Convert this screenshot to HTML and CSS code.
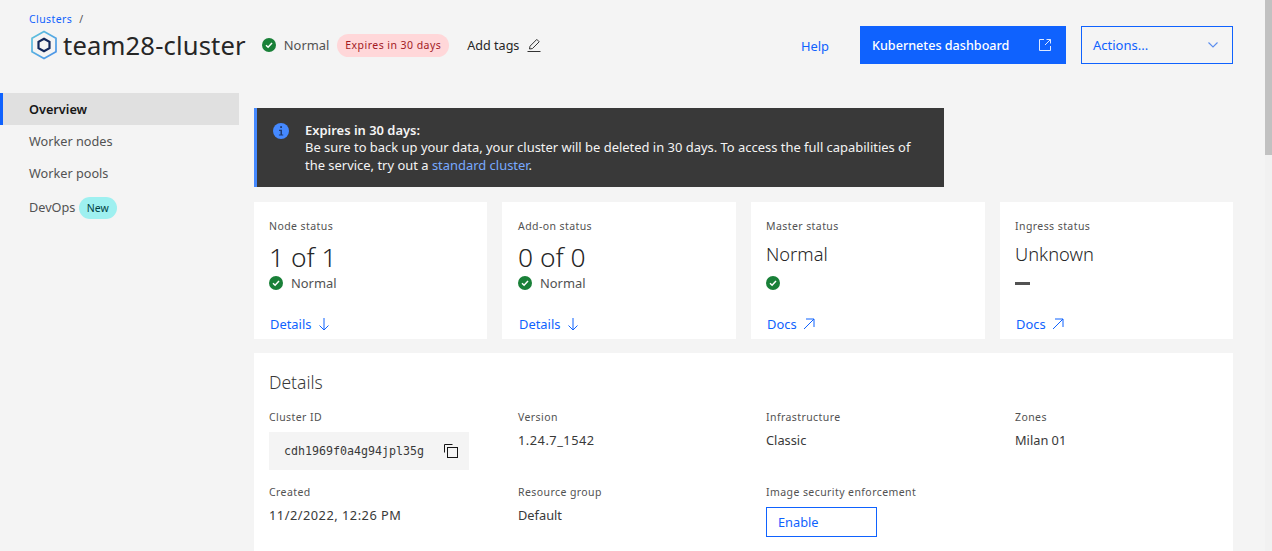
FILE: index.html
```html
<!DOCTYPE html>
<html lang="en">
<head>
    <meta charset="UTF-8">
    <meta name="viewport" content="width=device-width, initial-scale=1.0">
    <title>team28-cluster</title>
    <link rel="stylesheet" href="styles.css">
</head>
<body>
    <header class="page-header">
        <div class="title-block">
            <div class="breadcrumb"><a href="#">Clusters</a><span class="slash">/</span></div>
            <div class="title-row">
                <svg class="cluster-logo" width="30" height="30" viewBox="0 0 30 30" fill="none">
                    <defs>
                        <linearGradient id="hexEdge" x1="0" y1="0" x2="1" y2="1">
                            <stop offset="0" stop-color="#5fc4dc"/>
                            <stop offset="1" stop-color="#4a90e8"/>
                        </linearGradient>
                    </defs>
                    <path d="M15 1.5 L27 8.2 V21.8 L15 28.5 L3 21.8 V8.2 Z" stroke="url(#hexEdge)" stroke-width="1.7"/>
                    <path d="M15 8.7 L20.5 11.8 V18.2 L15 21.3 L9.5 18.2 V11.8 Z" stroke="#12275a" stroke-width="2.2"/>
                </svg>
                <h1>team28-cluster</h1>
                <svg class="check" width="14" height="14" viewBox="0 0 14 14">
                    <circle cx="7" cy="7" r="7" fill="#198038"/>
                    <path d="M4 7.2 L6.1 9.2 L10 5.1" fill="none" stroke="#fff" stroke-width="1.5"/>
                </svg>
                <span class="status-text">Normal</span>
                <span class="tag-red">Expires in 30 days</span>
                <span class="add-tags">Add tags</span>
                <svg width="16" height="16" viewBox="0 0 16 16" fill="none" stroke="#333" stroke-width="1">
                    <path d="M1.5 14.5 H14.5"/>
                    <path d="M3.5 12 L4 9.2 L10.8 2.4 L13.2 4.8 L6.4 11.6 Z"/>
                </svg>
            </div>
        </div>
        <div class="header-actions">
            <a class="help" href="#">Help</a>
            <button class="btn-primary">
                <span>Kubernetes dashboard</span>
                <svg width="16" height="16" viewBox="0 0 16 16" fill="none" stroke="#dfe9ff" stroke-width="1">
                    <path d="M7 2.5 H2.5 V13.5 H13.5 V9"/>
                    <path d="M9.5 2.5 H13.5 V6.5"/>
                    <path d="M13.5 2.5 L8 8"/>
                </svg>
            </button>
            <button class="btn-actions">
                <span>Actions...</span>
                <svg width="12" height="8" viewBox="0 0 12 8" fill="none" stroke="#5a8dee" stroke-width="1.1">
                    <path d="M1.5 1.5 L6 6 L10.5 1.5"/>
                </svg>
            </button>
        </div>
    </header>

    <div class="layout">
        <nav class="sidebar">
            <a class="nav-item active" href="#">Overview</a>
            <a class="nav-item" href="#">Worker nodes</a>
            <a class="nav-item" href="#">Worker pools</a>
            <a class="nav-item nav-devops" href="#">DevOps <span class="tag-new">New</span></a>
        </nav>

        <main class="content">
            <div class="notice">
                <svg class="notice-icon" width="16" height="16" viewBox="0 0 16 16">
                    <circle cx="8" cy="8" r="8" fill="#4589ff"/>
                    <rect x="7.2" y="3.2" width="1.8" height="1.8" fill="#1f3a6e"/>
                    <path d="M6 6.7 H9 V11.4 H10.2 V12.6 H5.9 V11.4 H7.5 V7.9 H6 Z" fill="#1f3a6e"/>
                </svg>
                <div class="notice-text">
                    <strong>Expires in 30 days:</strong><br>
                    Be sure to back up your data, your cluster will be deleted in 30 days. To access the full capabilities of the service, try out a <a href="#">standard cluster</a>.
                </div>
            </div>

            <section class="cards">
                <div class="card">
                    <div class="label">Node status</div>
                    <div class="big-value">1 of 1</div>
                    <div class="card-status">
                        <svg width="14" height="14" viewBox="0 0 14 14"><circle cx="7" cy="7" r="7" fill="#198038"/><path d="M4 7.2 L6.1 9.2 L10 5.1" fill="none" stroke="#fff" stroke-width="1.5"/></svg>
                        <span>Normal</span>
                    </div>
                    <a class="card-link" href="#">Details
                        <svg width="14" height="14" viewBox="0 0 14 14" fill="none" stroke="#0f62fe" stroke-width="1"><path d="M7 1 V13 M2.5 8.5 L7 13 L11.5 8.5"/></svg>
                    </a>
                </div>
                <div class="card">
                    <div class="label">Add-on status</div>
                    <div class="big-value">0 of 0</div>
                    <div class="card-status">
                        <svg width="14" height="14" viewBox="0 0 14 14"><circle cx="7" cy="7" r="7" fill="#198038"/><path d="M4 7.2 L6.1 9.2 L10 5.1" fill="none" stroke="#fff" stroke-width="1.5"/></svg>
                        <span>Normal</span>
                    </div>
                    <a class="card-link" href="#">Details
                        <svg width="14" height="14" viewBox="0 0 14 14" fill="none" stroke="#0f62fe" stroke-width="1"><path d="M7 1 V13 M2.5 8.5 L7 13 L11.5 8.5"/></svg>
                    </a>
                </div>
                <div class="card">
                    <div class="label">Master status</div>
                    <div class="mid-value">Normal</div>
                    <div class="card-status">
                        <svg width="14" height="14" viewBox="0 0 14 14"><circle cx="7" cy="7" r="7" fill="#198038"/><path d="M4 7.2 L6.1 9.2 L10 5.1" fill="none" stroke="#fff" stroke-width="1.5"/></svg>
                    </div>
                    <a class="card-link" href="#">Docs
                        <svg width="12" height="12" viewBox="0 0 12 12" fill="none" stroke="#0f62fe" stroke-width="1"><path d="M1 11 L11 1 M3 1 H11 V9"/></svg>
                    </a>
                </div>
                <div class="card">
                    <div class="label">Ingress status</div>
                    <div class="mid-value">Unknown</div>
                    <div class="card-status"><span class="dash"></span></div>
                    <a class="card-link" href="#">Docs
                        <svg width="12" height="12" viewBox="0 0 12 12" fill="none" stroke="#0f62fe" stroke-width="1"><path d="M1 11 L11 1 M3 1 H11 V9"/></svg>
                    </a>
                </div>
            </section>

            <section class="details">
                <h2>Details</h2>
                <div class="details-grid">
                    <div class="field">
                        <div class="label">Cluster ID</div>
                        <div class="code-box">
                            <code>cdh1969f0a4g94jpl35g</code>
                            <svg width="16" height="16" viewBox="0 0 16 16" fill="none" stroke="#161616" stroke-width="1">
                                <rect x="4.5" y="4.5" width="10" height="10"/>
                                <path d="M1.5 9.5 V1.5 H9.5"/>
                            </svg>
                        </div>
                    </div>
                    <div class="field">
                        <div class="label">Version</div>
                        <div class="value num">1.24.7_1542</div>
                    </div>
                    <div class="field">
                        <div class="label">Infrastructure</div>
                        <div class="value">Classic</div>
                    </div>
                    <div class="field">
                        <div class="label">Zones</div>
                        <div class="value">Milan 01</div>
                    </div>
                    <div class="field">
                        <div class="label">Created</div>
                        <div class="value num">11/2/2022, 12:26 PM</div>
                    </div>
                    <div class="field">
                        <div class="label">Resource group</div>
                        <div class="value">Default</div>
                    </div>
                    <div class="field">
                        <div class="label">Image security enforcement</div>
                        <button class="btn-enable">Enable</button>
                    </div>
                </div>
            </section>
        </main>
    </div>

    <div class="scrollbar"><div class="scrollbar-thumb"></div></div>
</body>
</html>
```

FILE: styles.css
```css
html, body {
    height: 551px;
    overflow: hidden;
}
body {
    margin: 0;
    background-color: #f4f4f4;
    color: #161616;
    font-family: "Noto Sans", "Liberation Sans", sans-serif;
    font-size: 12.9px;
}
a {
    color: #0f62fe;
    text-decoration: none;
}
button {
    font-family: inherit;
    cursor: pointer;
}

/* header */
.page-header {
    display: flex;
    justify-content: space-between;
    height: 93px;
    padding: 12px 39px 0 29px;
    box-sizing: border-box;
}
.breadcrumb {
    height: 14px;
    font-size: 10.5px;
    letter-spacing: 0.4px;
    line-height: 14px;
}
.slash {
    margin-left: 7px;
    color: #525252;
}
.title-row {
    display: flex;
    align-items: center;
    height: 36px;
    margin-top: 1px;
}
.cluster-logo {
    margin-right: 4px;
}
h1 {
    margin: 0 16px 0 0;
    color: #262626;
    font-size: 25.6px;
    font-weight: 400;
    letter-spacing: 0.15px;
}
.check {
    margin-right: 8px;
}
.status-text {
    color: #525252;
}
.tag-red {
    height: 23px;
    line-height: 23px;
    margin-left: 8px;
    padding: 0 8px;
    border-radius: 12px;
    background-color: #ffd7d9;
    color: #a2191f;
    font-size: 10.5px;
    letter-spacing: 0.45px;
}
.add-tags {
    margin: 0 7px 0 18px;
    color: #262626;
    font-size: 12.6px;
}
.header-actions {
    display: flex;
    align-items: flex-start;
    padding-top: 14px;
}
.help {
    margin: 11px 31px 0 0;
}
.btn-primary {
    display: flex;
    align-items: center;
    justify-content: space-between;
    width: 206px;
    height: 38px;
    margin-right: 15px;
    padding: 0 13px 0 12px;
    border: none;
    background-color: #0f62fe;
    color: #fff;
    font-size: 12.6px;
    font-weight: 500;
}
.btn-actions {
    display: flex;
    align-items: center;
    justify-content: space-between;
    width: 152px;
    height: 38px;
    padding: 0 13px 0 11px;
    border: 1px solid #0f62fe;
    background: none;
    color: #0f62fe;
    font-size: 13px;
}

/* page body */
.layout {
    display: flex;
}
.sidebar {
    flex: 0 0 239px;
    width: 239px;
}
.nav-item {
    display: block;
    height: 32px;
    padding-left: 29px;
    color: #525252;
    font-size: 12.7px;
    line-height: 32px;
}
.nav-item.active {
    padding-left: 26px;
    border-left: 3px solid #0f62fe;
    background-color: #e0e0e0;
    color: #161616;
    font-weight: 600;
}
.nav-devops {
    margin-top: 2px;
}
.tag-new {
    display: inline-block;
    height: 22px;
    padding: 0 8px;
    border-radius: 11px;
    background-color: #9ef0f0;
    color: #004144;
    font-size: 10.5px;
    line-height: 22px;
}
.content {
    flex: 0 0 979px;
    width: 979px;
    margin-left: 15px;
    padding-top: 15px;
}

/* notice */
.notice {
    display: flex;
    box-sizing: border-box;
    width: 690px;
    height: 79px;
    padding: 14px 20px 0 16px;
    border-left: 3px solid #4589ff;
    background-color: #393939;
    color: #f4f4f4;
    font-size: 12.95px;
    line-height: 17.4px;
}
.notice-icon {
    flex: none;
    margin: 1px 16px 0 0;
}
.notice-text strong {
    font-weight: 600;
}
.notice-text a {
    color: #78a9ff;
}

/* status cards */
.cards {
    display: grid;
    grid-template-columns: 233px 234px 234px 233px;
    gap: 15px;
    margin-top: 15px;
}
.card {
    display: flex;
    flex-direction: column;
    box-sizing: border-box;
    height: 137px;
    padding: 17px 15px 0;
    background-color: #fff;
}
.card:nth-child(2) {
    padding-left: 16px;
}
.label {
    height: 14px;
    color: #525252;
    font-size: 10.5px;
    letter-spacing: 0.42px;
    line-height: 14px;
}
.big-value {
    height: 34px;
    margin-top: 7px;
    color: #262626;
    font-size: 26.4px;
    font-weight: 300;
    line-height: 34px;
}
.mid-value {
    height: 26px;
    margin-top: 8px;
    margin-bottom: 8px;
    color: #262626;
    font-size: 18.3px;
    font-weight: 300;
    line-height: 26px;
}
.big-value + .card-status {
    margin-top: 1px;
}
.card-status {
    display: flex;
    align-items: center;
    gap: 8px;
    height: 16px;
    color: #525252;
}
.dash {
    width: 15px;
    height: 3px;
    background-color: #525252;
}
.card-link {
    display: flex;
    align-items: center;
    gap: 6px;
    margin-top: auto;
    margin-bottom: 6px;
    margin-left: 1px;
    line-height: 18px;
}

/* details panel */
.details {
    height: 181px;
    margin-top: 14px;
    padding: 17px 15px 0;
    background-color: #fff;
}
h2 {
    margin: 0 0 16px;
    color: #393939;
    font-size: 17.5px;
    font-weight: 300;
    line-height: 24px;
}
.details-grid {
    display: grid;
    grid-template-columns: 249px 248px 249px 1fr;
}
.field {
    height: 75px;
}
.field .value {
    margin-top: 7px;
    color: #393939;
    font-size: 12.8px;
    line-height: 18px;
}
.field .num {
    letter-spacing: 0.5px;
}
.code-box {
    display: flex;
    align-items: center;
    justify-content: space-between;
    box-sizing: border-box;
    width: 200px;
    height: 38px;
    margin-top: 8px;
    padding: 0 10px 0 15px;
    background-color: #f4f4f4;
}
code {
    color: #393939;
    font-family: "DejaVu Sans Mono", "Liberation Mono", monospace;
    font-size: 11.63px;
}
.btn-enable {
    display: block;
    width: 111px;
    height: 30px;
    margin-top: 8px;
    padding: 0 0 0 11px;
    border: 1px solid #0f62fe;
    background: none;
    color: #0f62fe;
    font-size: 12.8px;
    text-align: left;
}

/* fake browser scrollbar */
.scrollbar {
    position: absolute;
    top: 0;
    right: 0;
    width: 7px;
    height: 551px;
    background-color: #f1f1f1;
}
.scrollbar-thumb {
    height: 155px;
    background-color: #c1c1c1;
}
```
